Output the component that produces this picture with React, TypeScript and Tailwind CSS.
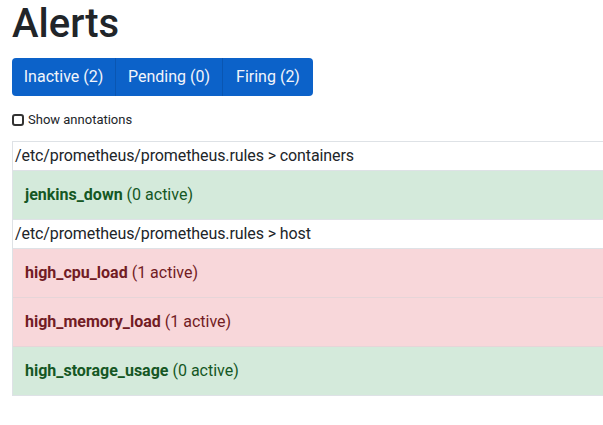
import React from "react";

type Rule = { name: string; active: number; firing: boolean };
type Group = { title: string; rules: Rule[] };

const groups: Group[] = [
  {
    title: "/etc/prometheus/prometheus.rules > containers",
    rules: [{ name: "jenkins_down", active: 0, firing: false }],
  },
  {
    title: "/etc/prometheus/prometheus.rules > host",
    rules: [
      { name: "high_cpu_load", active: 1, firing: true },
      { name: "high_memory_load", active: 1, firing: true },
      { name: "high_storage_usage", active: 0, firing: false },
    ],
  },
];

export default function App() {
  return (
    <div className="min-h-[425px] w-[603px] overflow-hidden bg-white text-[#212529] font-['Roboto',sans-serif]">
      <div className="pl-3">
        <h1 className="m-0 text-[40px] leading-[48px] font-medium">Alerts</h1>
        <div className="mt-[10px] flex w-fit">
          <button className="h-[38px] w-[104px] text-[16px] leading-6 text-[#f2f5fb] bg-[#0c62c9] rounded-l-[4px] border-r border-[#0a56b2]">
            Inactive (2)
          </button>
          <button className="h-[38px] w-[107px] text-[16px] leading-6 text-[#f2f5fb] bg-[#0c62c9] border-r border-[#0a56b2]">
            Pending (0)
          </button>
          <button className="h-[38px] w-[90px] text-[16px] leading-6 text-[#f2f5fb] bg-[#0c62c9] rounded-r-[4px]">
            Firing (2)
          </button>
        </div>
        <label className="mt-[14px] flex items-center gap-[4px] text-[13px] leading-[20px]">
          <span className="block h-[12px] w-[12px] rounded-[3px] border-2 border-[#333]" />
          <span>Show annotations</span>
        </label>
        <div className="mt-[11px] w-[640px] border-l border-t border-[#dee2e6]">
          {groups.map((g) => (
            <div key={g.title}>
              <div className="h-[29px] border-b border-[#dee2e6] pl-[2px] text-[16px] leading-[28px] tracking-[-0.1px]">
                {g.title}
              </div>
              {g.rules.map((r) => (
                <div
                  key={r.name}
                  className={
                    r.firing
                      ? "h-[49px] border-b border-[#e6d5d8] bg-[#f8d7da] pl-3 text-[16px] leading-[48px] text-[#721c24]"
                      : "h-[49px] border-b border-[#dee2e6] bg-[#d4eadb] pl-3 text-[16px] leading-[48px] text-[#155724]"
                  }
                >
                  <span className="font-bold">{r.name}</span> ({r.active} active)
                </div>
              ))}
            </div>
          ))}
        </div>
      </div>
    </div>
  );
}
